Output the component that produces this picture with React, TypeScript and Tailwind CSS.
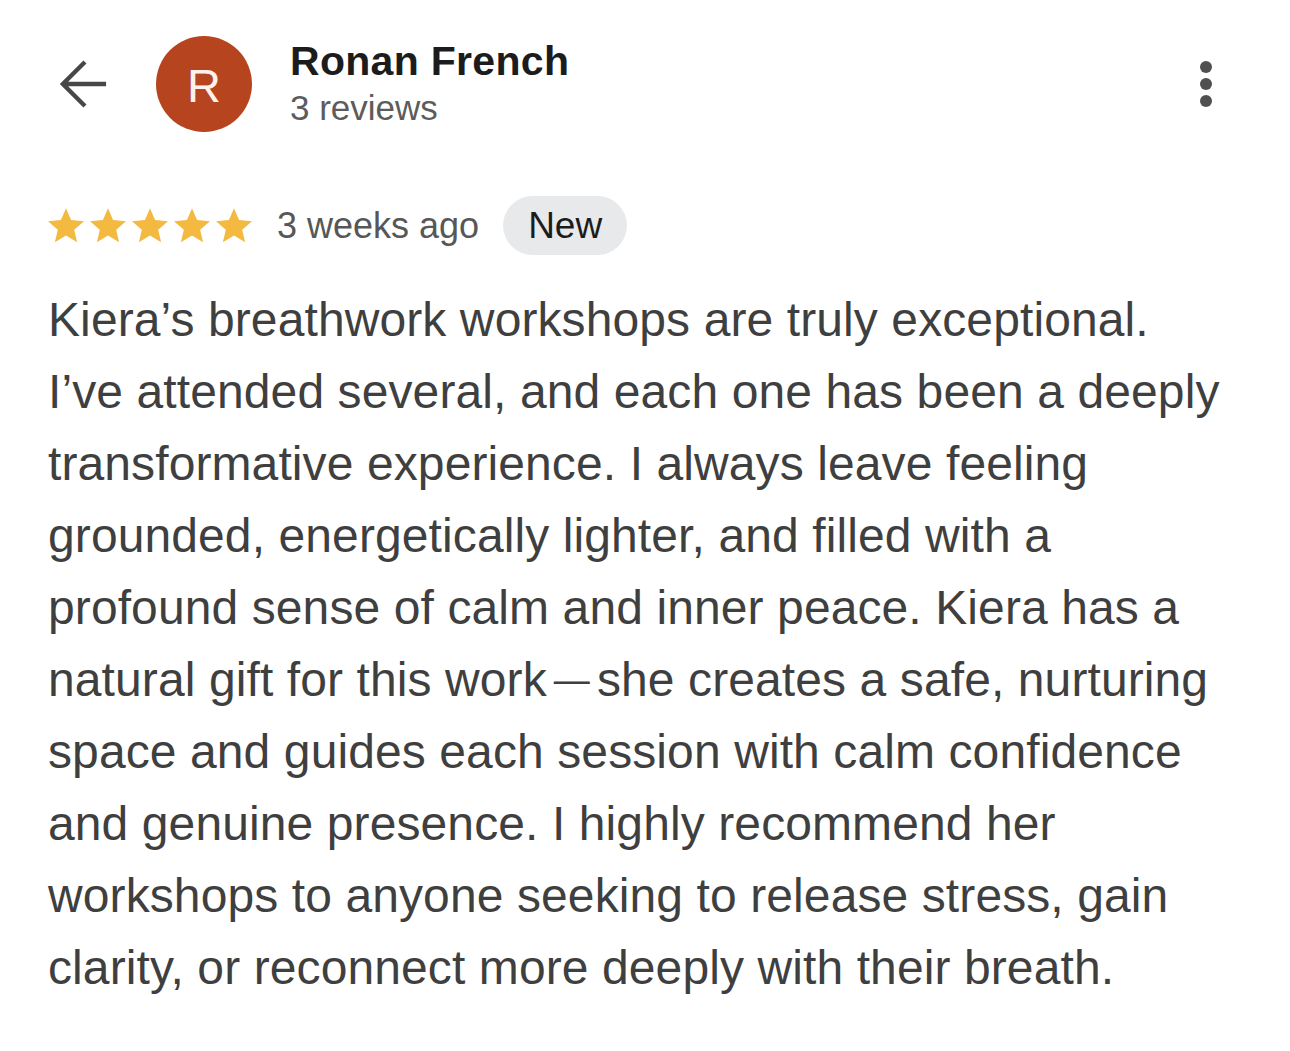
import React from "react";

const lines: React.ReactNode[] = [
  "Kiera\u2019s breathwork workshops are truly exceptional.",
  "I\u2019ve attended several, and each one has been a deeply",
  "transformative experience. I always leave feeling",
  "grounded, energetically lighter, and filled with a",
  "profound sense of calm and inner peace. Kiera has a",
  <>
    natural gift for this work
    <span className="inline-block text-[36px] mx-[7px] align-[4px]">{"\u2014"}</span>
    she creates a safe, nurturing
  </>,
  "space and guides each session with calm confidence",
  "and genuine presence. I highly recommend her",
  "workshops to anyone seeking to release stress, gain",
  "clarity, or reconnect more deeply with their breath.",
];

function Star() {
  return (
    <svg width="36" height="35" viewBox="2 2 20 19.3" className="block">
      <path
        d="M12 17.27L18.18 21l-1.64-7.03L22 9.24l-7.19-.61L12 2 9.19 8.63 2 9.24l5.46 4.73L5.82 21z"
        fill="#f3b940"
      />
    </svg>
  );
}

export default function App() {
  return (
    <div className="w-[1290px] h-[1051px] bg-white font-['Liberation_Sans',Arial,sans-serif] pl-[48px] overflow-hidden">
      {/* Header */}
      <div className="flex items-start pt-[36px] h-[132px]">
        <div className="ml-[12px] w-[48px] h-[96px] flex items-center">
          <svg width="50" height="50" viewBox="0 0 50 50" className="block">
            <path
              d="M48 25 H3 M26 2 L3 25 L26 48"
              fill="none"
              stroke="#474747"
              strokeWidth="4.5"
            />
          </svg>
        </div>
        <div className="ml-[48px] w-[96px] h-[96px] rounded-full bg-[#b6441f] flex items-center justify-center">
          <span className="text-[47px] leading-none text-[#fdf1ec] mt-[2px]">R</span>
        </div>
        <div className="ml-[38px] flex flex-col mt-[1px]">
          <div className="text-[41px] leading-[48px] font-bold tracking-[0.3px] text-[#1c1c1c]">Ronan French</div>
          <div className="text-[35px] leading-[40px] text-[#5c5c5c] mt-[3px]">3 reviews</div>
        </div>
        <div className="ml-auto mr-[78px] h-[96px] flex flex-col items-center justify-center gap-[5px]">
          <div className="w-[12px] h-[12px] rounded-full bg-[#505050]" />
          <div className="w-[12px] h-[12px] rounded-full bg-[#505050]" />
          <div className="w-[12px] h-[12px] rounded-full bg-[#505050]" />
        </div>
      </div>

      {/* Rating row */}
      <div className="flex items-center mt-[64px] h-[59px]">
        <div className="flex items-center gap-[6px]">
          <Star />
          <Star />
          <Star />
          <Star />
          <Star />
        </div>
        <span className="ml-[25px] text-[36px] text-[#575757] leading-none">3 weeks ago</span>
        <span className="ml-[24px] h-[59px] px-[25px] rounded-full bg-[#e8e9eb] flex items-center text-[37px] text-[#1c1c1c] leading-none">
          New
        </span>
      </div>

      {/* Body */}
      <div className="mt-[29px] text-[48px] leading-[72px] tracking-[0.1px] text-[#3f3f3f]">
        {lines.map((l, i) => (
          <div key={i} className="whitespace-nowrap">
            {l}
          </div>
        ))}
      </div>
    </div>
  );
}
